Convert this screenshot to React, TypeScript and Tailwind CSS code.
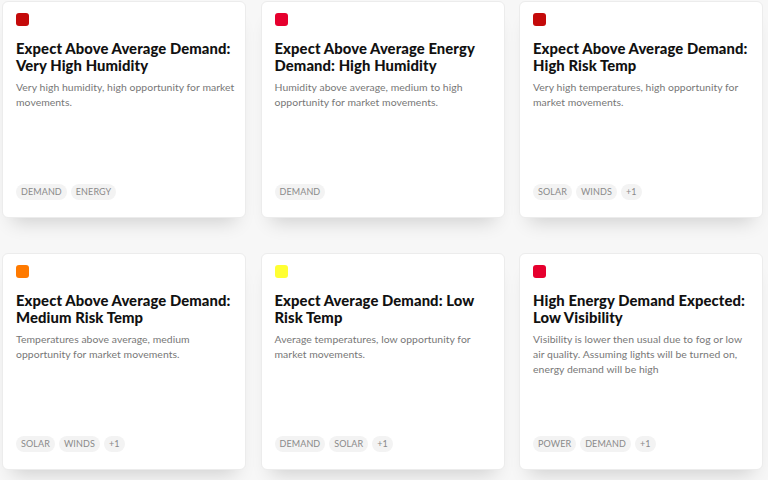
const cards = [
  {
    color: "bg-[#c40a0a]",
    title: "Expect Above Average Demand: Very High Humidity",
    desc: "Very high humidity, high opportunity for market movements.",
    tags: ["DEMAND", "ENERGY"],
  },
  {
    color: "bg-[#e6002e]",
    title: "Expect Above Average Energy Demand: High Humidity",
    desc: "Humidity above average, medium to high opportunity for market movements.",
    tags: ["DEMAND"],
  },
  {
    color: "bg-[#c40a0a]",
    title: "Expect Above Average Demand: High Risk Temp",
    desc: "Very high temperatures, high opportunity for market movements.",
    tags: ["SOLAR", "WINDS", "+1"],
  },
  {
    color: "bg-[#ff7a00]",
    title: "Expect Above Average Demand: Medium Risk Temp",
    desc: "Temperatures above average, medium opportunity for market movements.",
    tags: ["SOLAR", "WINDS", "+1"],
  },
  {
    color: "bg-[#ffff33]",
    title: "Expect Average Demand: Low Risk Temp",
    desc: "Average temperatures, low opportunity for market movements.",
    tags: ["DEMAND", "SOLAR", "+1"],
  },
  {
    color: "bg-[#e6002e]",
    title: "High Energy Demand Expected: Low Visibility",
    desc: "Visibility is lower then usual due to fog or low air quality. Assuming lights will be turned on, energy demand will be high",
    tags: ["POWER", "DEMAND", "+1"],
  },
];

export default function App() {
  return (
    <div className="h-[480px] w-[768px] overflow-hidden bg-[#f7f7f7] font-['Lato',sans-serif]">
      <div className="grid grid-cols-[244px_244px_244px] gap-x-[14.5px] gap-y-[35px] pl-[2px] pt-[1px]">
        {cards.map((c, i) => (
          <div
            key={i}
            className="flex h-[217px] flex-col rounded-[6px] border border-[#ececec] bg-white pb-[17px] pl-[13px] pr-[10px] pt-[11px] shadow-[0_14px_18px_-10px_rgba(0,0,0,0.16)]"
          >
            <div className={`h-[13px] w-[13px] rounded-[3px] ${c.color}`} />
            <h2 className="mt-[14px] text-[14.8px] font-black leading-[17px] tracking-[0.1px] text-[#111]">
              {c.title}
            </h2>
            <p className="mt-[6px] text-[10.4px] leading-[15px] tracking-[0.05px] text-[#777]">
              {c.desc}
            </p>
            <div className="mt-auto flex gap-[4px]">
              {c.tags.map((t) => (
                <span
                  key={t}
                  className="rounded-full bg-[#f3f3f3] px-[5px] text-[9px] leading-[16px] tracking-[0.1px] text-[#8a8a8a]"
                >
                  {t}
                </span>
              ))}
            </div>
          </div>
        ))}
      </div>
    </div>
  );
}
